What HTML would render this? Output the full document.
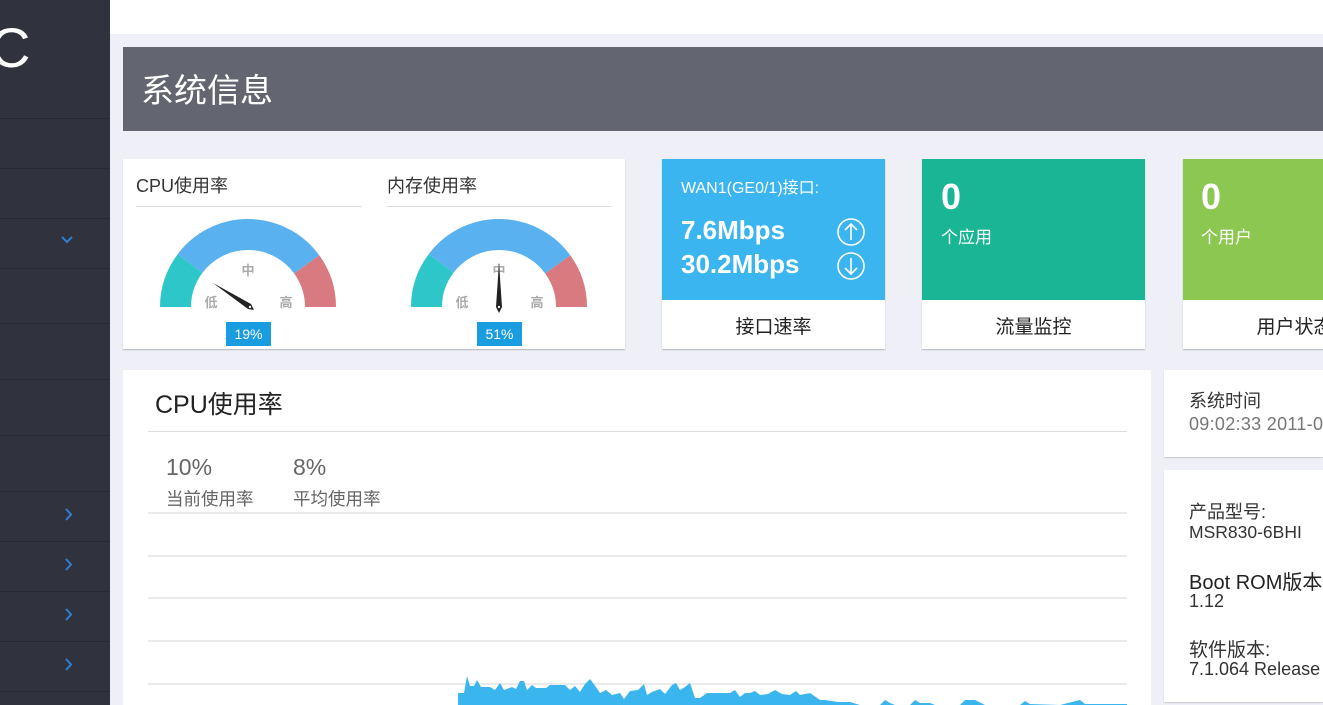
<!DOCTYPE html>
<html><head><meta charset="utf-8"><style>
*{margin:0;padding:0;box-sizing:border-box}
body{width:1323px;height:705px;overflow:hidden;background:#eeeff7;font-family:"Liberation Sans","Noto Sans CJK SC",sans-serif;position:relative}
.a{position:absolute}
.sb{left:0;top:0;width:110px;height:705px;background:#30333d}
.sl{position:absolute;left:0;width:110px;height:1px;background:#272a32}
.card{background:#fff;box-shadow:0 1px 1px #b5b5bd}
.t{white-space:nowrap}
</style></head><body>
<div class="a sb">
<div class="a t" style="left:-10px;top:18px;color:#fff;font-size:56px;font-weight:300;line-height:60px">C</div>
<div class="sl" style="top:118px"></div><div class="sl" style="top:168px"></div><div class="sl" style="top:218px"></div><div class="sl" style="top:268px"></div><div class="sl" style="top:323px"></div><div class="sl" style="top:379px"></div><div class="sl" style="top:435px"></div><div class="sl" style="top:491px"></div><div class="sl" style="top:541px"></div><div class="sl" style="top:591px"></div><div class="sl" style="top:641px"></div><div class="sl" style="top:691px"></div>
<svg class="a" style="left:61px;top:236px" width="12" height="8"><path d="M1 1 L6 6 L11 1" stroke="#2f7fd3" stroke-width="2" fill="none"/></svg>
<svg class="a" style="left:65px;top:508px" width="8" height="13"><path d="M1 1 L6 6.5 L1 12" stroke="#2f7fd3" stroke-width="2" fill="none"/></svg>
<svg class="a" style="left:65px;top:558px" width="8" height="13"><path d="M1 1 L6 6.5 L1 12" stroke="#2f7fd3" stroke-width="2" fill="none"/></svg>
<svg class="a" style="left:65px;top:608px" width="8" height="13"><path d="M1 1 L6 6.5 L1 12" stroke="#2f7fd3" stroke-width="2" fill="none"/></svg>
<svg class="a" style="left:65px;top:658px" width="8" height="13"><path d="M1 1 L6 6.5 L1 12" stroke="#2f7fd3" stroke-width="2" fill="none"/></svg>
</div>
<div class="a" style="left:110px;top:0;width:1213px;height:34px;background:#fff"></div>
<div class="a" style="left:123px;top:47px;width:1200px;height:84px;background:#636571"></div>
<div class="a t" style="left:141px;top:71px;color:#fff;font-size:33px;line-height:40px">系统信息</div>

<div class="a card" style="left:123px;top:159px;width:502px;height:190px"></div>
<div class="a t" style="left:136px;top:172px;font-size:18px;color:#333">CPU使用率</div>
<div class="a" style="left:136px;top:206px;width:226px;height:1px;background:#ddd"></div>
<div class="a t" style="left:387px;top:172px;font-size:18px;color:#333">内存使用率</div>
<div class="a" style="left:387px;top:206px;width:224px;height:1px;background:#ddd"></div>

<svg class="a" style="left:0;top:0" width="640" height="360">
<g transform="translate(248,307)">
<path d="M-72.5 0 A72.5 72.5 0 0 1 -57.9 -43.6" stroke="#2ec7c9" stroke-width="31" fill="none"/>
<path d="M-57.9 -43.6 A72.5 72.5 0 0 1 58.7 -42.6" stroke="#5ab1ef" stroke-width="31" fill="none"/>
<path d="M58.7 -42.6 A72.5 72.5 0 0 1 72.5 0" stroke="#d87a80" stroke-width="31" fill="none"/>
<text x="0" y="-32" text-anchor="middle" font-size="13" font-weight="bold" fill="#aaa">中</text>
<text x="-37" y="0" text-anchor="middle" font-size="13" font-weight="bold" fill="#aaa">低</text>
<text x="38" y="0" text-anchor="middle" font-size="13" font-weight="bold" fill="#aaa">高</text>
<path d="M-35 -24 L3 -3 L6 3 L0 2 Z" fill="#222"/><circle cx="2" cy="0" r="1.2" fill="#fff"/>
</g>
<g transform="translate(499,307)">
<path d="M-72.5 0 A72.5 72.5 0 0 1 -57.9 -43.6" stroke="#2ec7c9" stroke-width="31" fill="none"/>
<path d="M-57.9 -43.6 A72.5 72.5 0 0 1 58.7 -42.6" stroke="#5ab1ef" stroke-width="31" fill="none"/>
<path d="M58.7 -42.6 A72.5 72.5 0 0 1 72.5 0" stroke="#d87a80" stroke-width="31" fill="none"/>
<text x="0" y="-32" text-anchor="middle" font-size="13" font-weight="bold" fill="#aaa">中</text>
<text x="-37" y="0" text-anchor="middle" font-size="13" font-weight="bold" fill="#aaa">低</text>
<text x="38" y="0" text-anchor="middle" font-size="13" font-weight="bold" fill="#aaa">高</text>
<path d="M0 -44 L3 0 L0 6 L-3 0 Z" fill="#222"/><circle cx="0" cy="0" r="1.2" fill="#fff"/>
</g>
</svg>
<div class="a t" style="left:226px;top:322px;width:45px;height:24px;background:#1a9de0;color:#fff;font-size:14px;line-height:24px;text-align:center">19%</div>
<div class="a t" style="left:477px;top:322px;width:45px;height:24px;background:#1a9de0;color:#fff;font-size:14px;line-height:24px;text-align:center">51%</div>

<div class="a card" style="left:662px;top:159px;width:223px;height:190px"></div>
<div class="a" style="left:662px;top:159px;width:223px;height:141px;background:#3bb5ef"></div>
<div class="a t" style="left:681px;top:174px;color:#fff;font-size:16px">WAN1(GE0/1)接口:</div>
<div class="a t" style="left:681px;top:215px;color:#fff;font-size:26px;font-weight:bold">7.6Mbps</div>
<div class="a t" style="left:681px;top:249px;color:#fff;font-size:26px;font-weight:bold">30.2Mbps</div>
<svg class="a" style="left:836px;top:217px" width="30" height="65"><g stroke="#fff" fill="none" stroke-width="1.6"><circle cx="15" cy="15" r="13"/><path d="M15 23 V7 M9 13 L15 7 L21 13"/><circle cx="15" cy="49" r="13"/><path d="M15 41 V57 M9 51 L15 57 L21 51"/></g></svg>
<div class="a t" style="left:662px;top:312px;width:223px;text-align:center;font-size:19px;color:#222">接口速率</div>

<div class="a card" style="left:922px;top:159px;width:223px;height:190px"></div>
<div class="a" style="left:922px;top:159px;width:223px;height:141px;background:#1ab594"></div>
<div class="a t" style="left:941px;top:176px;color:#fff;font-size:36px;font-weight:bold">0</div>
<div class="a t" style="left:941px;top:223px;color:#fff;font-size:17px">个应用</div>
<div class="a t" style="left:922px;top:312px;width:223px;text-align:center;font-size:19px;color:#222">流量监控</div>

<div class="a card" style="left:1183px;top:159px;width:223px;height:190px"></div>
<div class="a" style="left:1183px;top:159px;width:223px;height:141px;background:#8cc751"></div>
<div class="a t" style="left:1201px;top:176px;color:#fff;font-size:36px;font-weight:bold">0</div>
<div class="a t" style="left:1201px;top:223px;color:#fff;font-size:17px">个用户</div>
<div class="a t" style="left:1183px;top:312px;width:223px;text-align:center;font-size:19px;color:#222">用户状态</div>

<div class="a" style="left:123px;top:370px;width:1028px;height:335px;background:#fff"></div>
<div class="a t" style="left:155px;top:385px;font-size:25px;color:#222">CPU使用率</div>
<div class="a" style="left:148px;top:431px;width:979px;height:1px;background:#ddd"></div>
<div class="a t" style="left:166px;top:454px;font-size:23px;color:#666">10%</div>
<div class="a t" style="left:166px;top:486px;font-size:17.5px;color:#666">当前使用率</div>
<div class="a t" style="left:293px;top:454px;font-size:23px;color:#666">8%</div>
<div class="a t" style="left:293px;top:486px;font-size:17.5px;color:#666">平均使用率</div>
<svg class="a" style="left:0;top:0" width="1323" height="705">
<g stroke="#e3e3e3" stroke-width="1.5"><line x1="148" y1="513" x2="1127" y2="513"/><line x1="148" y1="556" x2="1127" y2="556"/><line x1="148" y1="598" x2="1127" y2="598"/><line x1="148" y1="641" x2="1127" y2="641"/><line x1="148" y1="684" x2="1127" y2="684"/></g>
<polygon fill="#3bb5ee" points="458,705 458,693 464,693 467,676 470,686 474,686 477,680 481,687 490,687 495,690 500,683 504,690 512,687 516,689 520,681 524,681 527,690 532,685 536,688 546,688 550,685 565,685 570,690 575,686 580,692 585,684 590,679 596,687 600,693 606,690 612,695 620,693 624,699 630,691 638,690 644,684 647,695 652,692 660,689 665,694 672,685 676,683 680,690 685,687 690,683 695,698 700,698 707,693 730,693 735,690 740,697 745,693 750,693 755,691 760,695 768,694 775,690 782,694 790,695 796,691 800,695 810,693 820,700 825,700 838,702 850,702 860,705 880,705 885,700 890,703 895,705 910,705 915,700 920,703 930,703 935,705 960,705 965,700 975,700 985,705 1020,705 1025,701 1030,704 1060,705 1080,700 1085,704 1127,704 1127,705"/>
</svg>

<div class="a" style="left:1164px;top:370px;width:159px;height:87px;background:#fff;box-shadow:0 1px 1px #c8c8d0"></div>
<div class="a t" style="left:1189px;top:387px;font-size:18px;color:#333">系统时间</div>
<div class="a t" style="left:1189px;top:414px;font-size:18px;color:#777;letter-spacing:0.3px">09:02:33 2011-01-01</div>
<div class="a" style="left:1164px;top:470px;width:159px;height:232px;background:#fff;box-shadow:0 1px 1px #c8c8d0"></div>
<div class="a t" style="left:1189px;top:498px;font-size:18px;color:#333">产品型号:</div>
<div class="a t" style="left:1189px;top:522px;font-size:17.5px;color:#333">MSR830-6BHI</div>
<div class="a t" style="left:1189px;top:566px;font-size:20px;color:#222">Boot ROM版本:</div>
<div class="a t" style="left:1189px;top:591px;font-size:18px;color:#333">1.12</div>
<div class="a t" style="left:1189px;top:635px;font-size:19px;color:#333">软件版本:</div>
<div class="a t" style="left:1189px;top:659px;font-size:18px;color:#333">7.1.064 Release</div>
</body></html>
